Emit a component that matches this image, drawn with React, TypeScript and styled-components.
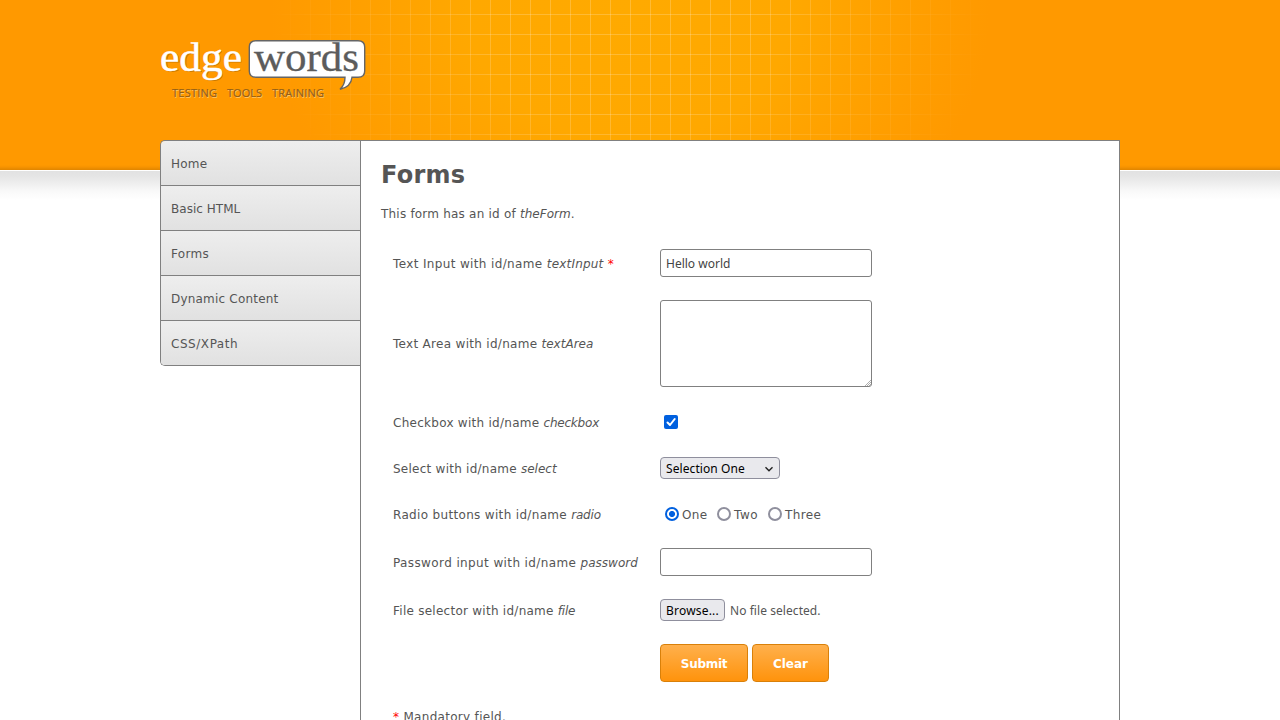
import React from "react";
import styled, { createGlobalStyle } from "styled-components";

const Global = createGlobalStyle`
  * { box-sizing: border-box; }
  html, body { margin: 0; height: 720px; overflow: hidden; background: #fff; }
  body { font: 12px/18px Verdana, "DejaVu Sans", sans-serif; color: #555; }
`;

const Page = styled.div`
  height: 720px;
  overflow: hidden;
  background:
    linear-gradient(#ff9900, #f79300 40%, #e08500) 0 165px / 100% 5px no-repeat,
    linear-gradient(#e2e2e2, #e5e5e5 18%, #eeeeee 42%, #f9f9f9 70%, #ffffff) 0 171px / 100% 29px no-repeat,
    radial-gradient(ellipse 360px 290px at 630px 10px, #ffaa00 0%, #ffa800 45%, #ff9900 100%) 0 0 / 100% 170px no-repeat,
    #fff;
`;

const GridLines = styled.div`
  height: 140px;
  margin-bottom: -140px;
  background:
    repeating-linear-gradient(90deg, transparent 0 10px, rgba(255,255,255,.2) 10px 11px, transparent 11px 20px),
    repeating-linear-gradient(180deg, transparent 0 14px, rgba(255,255,255,.2) 14px 15px, transparent 15px 20px);
  mask-image: radial-gradient(ellipse 360px 280px at 630px 20px, #000 35%, transparent 100%);
`;

const Wrap = styled.div`
  position: relative;
  width: 960px;
  margin: 0 auto;
`;

const Header = styled.header`
  height: 140px;
  padding-top: 30px;
  svg { display: block; margin-left: -10px; }
`;

const Columns = styled.div`
  display: flex;
  align-items: flex-start;
`;

const Nav = styled.nav`
  width: 200px;
  border: 1px solid #808080;
  border-right: 0;
  border-radius: 5px 0 0 5px;
  overflow: hidden;
`;

const NavItem = styled.a<{ $ls: number }>`
  display: block;
  height: 45px;
  padding: 1px 10px 0;
  line-height: 45px;
  letter-spacing: ${(p) => p.$ls}px;
  background: linear-gradient(#eeeeee, #e1e1e1);
  border-bottom: 1px solid #808080;
  &:last-child { height: 44px; border-bottom: 0; }
`;

const Main = styled.main`
  width: 760px;
  height: 600px;
  border: 1px solid #808080;
  background: #fff;
  padding: 18px 20px 0;
`;

const Title = styled.h1`
  margin: 0;
  padding-top: 1px;
  font-size: 24px;
  line-height: 30px;
  letter-spacing: .25px;
`;

const Intro = styled.p`
  margin: 15px 0 0;
  height: 33px;
  letter-spacing: .21px;
  em { letter-spacing: .05px; }
`;

const Row = styled.div<{ $h: number }>`
  display: flex;
  align-items: center;
  height: ${(p) => p.$h}px;
  padding-left: 12px;
`;

const Label = styled.label<{ $ls?: number; $em?: number; $top?: number }>`
  width: 267px;
  padding-top: ${(p) => p.$top ?? 2}px;
  white-space: nowrap;
  letter-spacing: ${(p) => p.$ls ?? 0}px;
  em { letter-spacing: ${(p) => p.$em ?? 0}px; }
`;

const Star = styled.span`
  color: #f00;
`;

const controlFont = `font: 12px/18px "Noto Sans", "Open Sans", sans-serif;`;

const TextField = styled.input`
  ${controlFont}
  width: 212px;
  height: 28px;
  padding: 0 5px;
  margin: 0;
  border: 1px solid #808080;
  border-radius: 3px;
  color: #444;
  background: #fff;
`;

const AreaBox = styled.div`
  position: relative;
  width: 212px;
  height: 87px;
  svg { position: absolute; right: 1px; bottom: 1px; }
`;

const Area = styled.textarea`
  display: block;
  width: 100%;
  height: 100%;
  margin: 0;
  border: 1px solid #808080;
  border-radius: 3px;
  resize: none;
`;

const Check = styled.span`
  width: 14px;
  height: 14px;
  margin-left: 4px;
  border-radius: 2px;
  background: #0060df;
  svg { display: block; }
`;

const GreyControl = styled.button<{ $w: number; $ls: number }>`
  ${controlFont}
  display: flex;
  align-items: center;
  justify-content: space-between;
  width: ${(p) => p.$w}px;
  height: 22px;
  padding: 1px 5px 0;
  border: 1px solid #8f8f9d;
  border-radius: 4px;
  background: #e9e9ed;
  color: #000;
  letter-spacing: ${(p) => p.$ls}px;
  white-space: nowrap;
`;

const FileName = styled.span`
  ${controlFont}
  margin-left: 5px;
  padding-top: 2px;
  letter-spacing: .06px;
`;

const Option = styled.label<{ $w: number; $ls: number }>`
  display: flex;
  align-items: center;
  gap: 3px;
  width: ${(p) => p.$w}px;
  letter-spacing: ${(p) => p.$ls}px;
`;

const OptionText = styled.span`
  padding-top: 2px;
`;

const Dot = styled.span<{ $on?: boolean }>`
  width: 14px;
  height: 14px;
  border-radius: 50%;
  border: 2px solid ${(p) => (p.$on ? "#0060df" : "#8f8f9d")};
  background: ${(p) => (p.$on ? "radial-gradient(circle, #0060df 2.7px, #fff 3.3px)" : "#fff")};
`;

const Options = styled.div`
  display: flex;
  padding-left: 5px;
`;

const Button = styled.button<{ $w: number; $ls?: number }>`
  width: ${(p) => p.$w}px;
  height: 38px;
  margin-right: 4px;
  padding: 2px 0 0;
  border: 1px solid #d98009;
  border-radius: 4px;
  background: linear-gradient(#ffb04c, #ff930c);
  color: #fff;
  font: bold 12px/18px Verdana, "DejaVu Sans", sans-serif;
  letter-spacing: ${(p) => p.$ls ?? 0}px;
`;

const Logo = () => (
  <svg width="220" height="75" viewBox="150 30 220 75">
    <g fontFamily="'Liberation Serif', serif">
      <text x="162" y="72" fontSize="40" fill="#b86e00" opacity=".7" textLength="81" lengthAdjust="spacingAndGlyphs">edge</text>
      <text x="160" y="71" fontSize="40" fill="#fff" stroke="#fff" strokeWidth=".5" textLength="82" lengthAdjust="spacingAndGlyphs">edge</text>
      <path d="M256 40.7H358Q364.7 40.7 364.7 47V71Q364.7 77.3 358 77.3H352Q351 87 340 89.3Q345 85 345 77.3H256Q249.3 77.3 249.3 71V47Q249.3 40.7 256 40.7Z" fill="#fff" stroke="#656565" strokeWidth="1.4" />
      <text x="254" y="71" fontSize="39.5" fill="#5c5c5c" stroke="#5c5c5c" strokeWidth=".3" textLength="105" lengthAdjust="spacingAndGlyphs">words</text>
    </g>
    <g fontFamily="'Open Sans', sans-serif" fontSize="11">
      <g fill="#ffc366" transform="translate(1 1)">
        <text x="172" y="97" textLength="45">TESTING</text>
        <text x="227" y="97" textLength="35">TOOLS</text>
        <text x="272" y="97" textLength="52">TRAINING</text>
      </g>
      <g fill="#936018" stroke="#936018" strokeWidth=".2">
        <text x="172" y="97" textLength="45">TESTING</text>
        <text x="227" y="97" textLength="35">TOOLS</text>
        <text x="272" y="97" textLength="52">TRAINING</text>
      </g>
    </g>
  </svg>
);

const links: [string, number][] = [
  ["Home", 0.25],
  ["Basic HTML", 0.03],
  ["Forms", 0.3],
  ["Dynamic Content", 0.2],
  ["CSS/XPath", 0.55],
];

export default function App() {
  return (
    <Page>
      <Global />
      <GridLines />
      <Wrap>
        <Header><Logo /></Header>
        <Columns>
          <Nav>{links.map(([text, ls]) => <NavItem key={text} $ls={ls}>{text}</NavItem>)}</Nav>
          <Main>
            <Title>Forms</Title>
            <Intro>This form has an id of <em>theForm</em>.</Intro>
            <Row $h={50}>
              <Label $ls={0.36} $em={0.2}>Text Input with id/name <em>textInput</em> <Star>*</Star></Label>
              <TextField defaultValue="Hello world" />
            </Row>
            <Row $h={111}>
              <Label $ls={0.3} $top={0}>Text Area with id/name <em>textArea</em></Label>
              <AreaBox>
                <Area />
                <svg width="6" height="6" viewBox="0 0 6 6" stroke="#999" strokeWidth=".8"><path d="M0 6L6 0M2 6L6 2M4 6L6 4" /></svg>
              </AreaBox>
            </Row>
            <Row $h={46}>
              <Label $ls={0.27} $em={-0.2}>Checkbox with id/name <em>checkbox</em></Label>
              <Check>
                <svg width="14" height="14" viewBox="0 0 14 14" fill="none" stroke="#fff" strokeWidth="2" strokeLinecap="round" strokeLinejoin="round"><path d="M3.5 7.5L6 10L10.7 4" /></svg>
              </Check>
            </Row>
            <Row $h={46}>
              <Label $ls={0.25}>Select with id/name <em>select</em></Label>
              <GreyControl $w={120} $ls={0.08}>
                Selection One
                <svg width="10" height="8" viewBox="0 0 10 8" fill="none" stroke="#222" strokeWidth="1.4"><path d="M1.5 2.2L5 5.7L8.5 2.2" /></svg>
              </GreyControl>
            </Row>
            <Row $h={46}>
              <Label $ls={0.33} $em={-0.2}>Radio buttons with id/name <em>radio</em></Label>
              <Options>
                <Option $w={52} $ls={0.4}><Dot $on /><OptionText>One</OptionText></Option>
                <Option $w={51} $ls={0.6}><Dot /><OptionText>Two</OptionText></Option>
                <Option $w={60} $ls={0.4}><Dot /><OptionText>Three</OptionText></Option>
              </Options>
            </Row>
            <Row $h={50}>
              <Label $ls={0.39}>Password input with id/name <em>password</em></Label>
              <TextField type="password" />
            </Row>
            <Row $h={46}>
              <Label $ls={0.26} $em={-0.2}>File selector with id/name <em>file</em></Label>
              <GreyControl $w={65} $ls={0.2}>Browse...</GreyControl>
              <FileName>No file selected.</FileName>
            </Row>
            <Row $h={60}>
              <Label />
              <Button $w={88} $ls={-0.3}>Submit</Button>
              <Button $w={77}>Clear</Button>
            </Row>
            <Row $h={46}><Label $ls={0.3}><Star>*</Star> Mandatory field.</Label></Row>
          </Main>
        </Columns>
      </Wrap>
    </Page>
  );
}
